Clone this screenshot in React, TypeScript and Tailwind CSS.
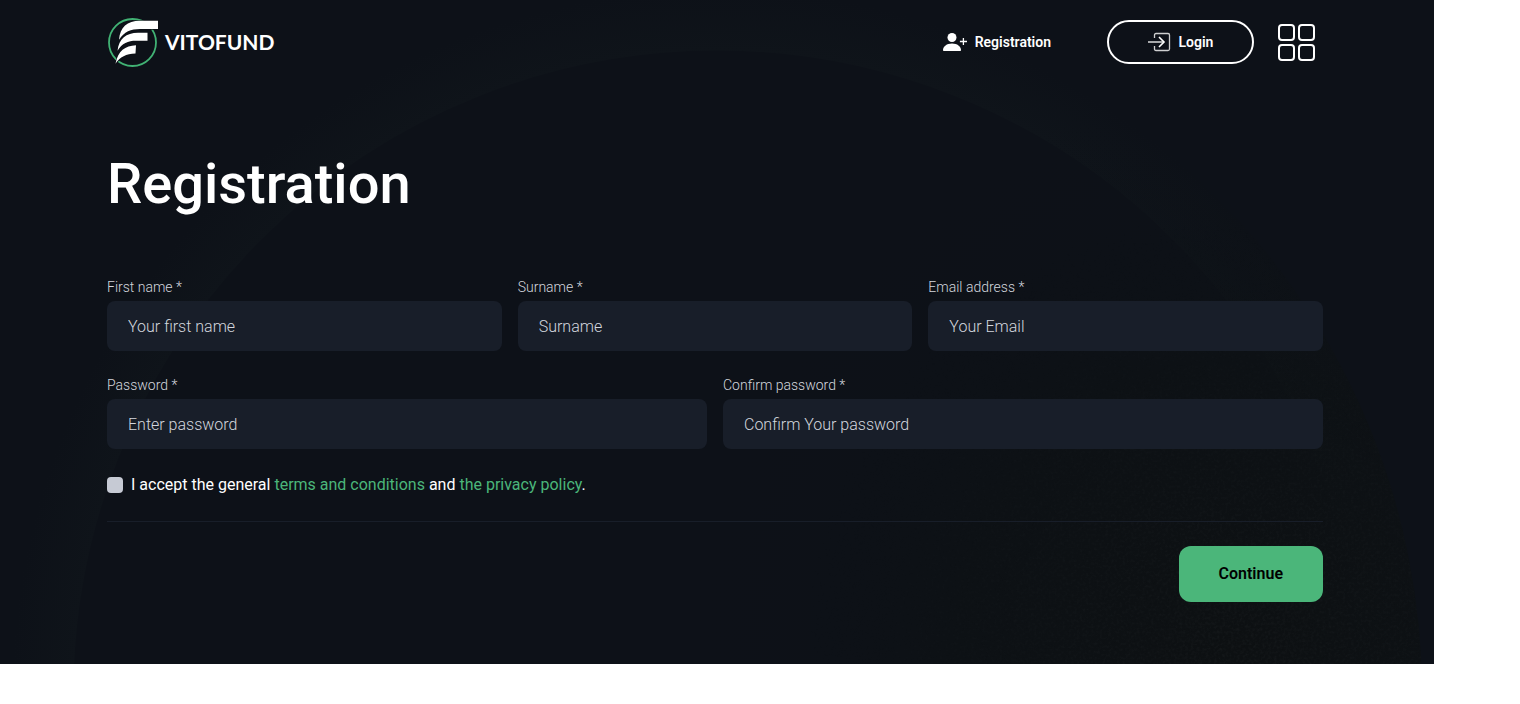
import type { ReactNode } from 'react';

interface FieldProps {
  id: string;
  label: string;
  placeholder: string;
  type?: string;
}

function Field({ id, label, placeholder, type = 'text' }: FieldProps) {
  return (
    <div className="flex-1 min-w-0">
      <label htmlFor={id} className="block mb-1 text-sm font-light text-[#d3d6de]">
        {label}
      </label>
      <input
        id={id}
        name={id}
        type={type}
        placeholder={placeholder}
        className="block w-full h-[50px] px-[21px] text-base font-light text-white bg-[#181e29] rounded-lg placeholder:text-[#d3d6de] placeholder:opacity-100 focus:outline-none focus:ring-1 focus:ring-[#4bb67a]"
      />
    </div>
  );
}

function LogoMark() {
  return (
    <svg width="52" height="50" viewBox="0 1 52 50" fill="none" aria-hidden="true">
      <circle cx="25.500" cy="26.500" r="23.500" stroke="#41b274" strokeWidth="1.8" />
      <g fill="#fff" stroke="#0d1117" strokeWidth="1.2" paintOrder="stroke">
        <path d="M51 4.800H33C20 5 13 11 12 23.800C17 15.800 24 13.100 33 13.100H51Z" />
        <path d="M40.500 16.800H31C19 17.100 12 22.300 10.500 34.800C15 27.300 21 24.800 29 24.800H40.500Z" />
        <path d="M29 29.300C18 29.800 11 34.800 8.500 47.800C13 40.800 19 38.100 28.500 37.600Z" />
      </g>
    </svg>
  );
}

function UserPlusIcon() {
  return (
    <svg width="24" height="20" viewBox="0 0 24 20" aria-hidden="true">
      <circle cx="9" cy="5.500" r="4.500" fill="#fff" />
      <path d="M0 18.200C0 14.200 3.800 11.400 9 11.400S18 14.200 18 18.200Q18 19 17.200 19H0.800Q0 19 0 18.200Z" fill="#fff" />
      <path d="M20.400 6V13M16.900 9.500H24" stroke="#fff" strokeWidth="1.300" />
    </svg>
  );
}

function LoginIcon() {
  return (
    <svg width="23" height="20" viewBox="0 0 23 20" fill="none" stroke="#fff" strokeWidth="1.300" aria-hidden="true">
      <path d="M6.500 6V3Q6.500 1.500 8 1.500H20Q21.500 1.500 21.500 3V17Q21.500 18.500 20 18.500H8Q6.500 18.500 6.500 17V14" strokeOpacity=".8" />
      <path d="M0 10H15.500" strokeOpacity=".8" strokeWidth="1.600" />
      <path d="M11 5L16 10L11 15" strokeWidth="1.600" />
    </svg>
  );
}

function MenuIcon() {
  return (
    <svg width="37" height="37" viewBox="0 0 37 37" fill="none" stroke="#fff" strokeWidth="2" aria-hidden="true">
      <rect x="1" y="1" width="15" height="15" rx="3" />
      <rect x="21" y="1" width="15" height="15" rx="3" />
      <rect x="1" y="21" width="15" height="15" rx="3" />
      <rect x="21" y="21" width="15" height="15" rx="3" />
    </svg>
  );
}

// faint ring and grain behind the form
function Backdrop() {
  return (
    <svg
      className="absolute inset-0 w-full h-full"
      viewBox="0 0 1434 664"
      preserveAspectRatio="xMidYMin slice"
      aria-hidden="true"
    >
      <defs>
        <radialGradient id="ring" gradientUnits="userSpaceOnUse" cx="717" cy="694" r="705">
          <stop offset=".91" stopColor="#0f141a" />
          <stop offset="1" stopColor="#0d1118" />
        </radialGradient>
        <radialGradient id="shade" gradientUnits="userSpaceOnUse" cx="1240" cy="650" r="560">
          <stop offset="0" stopColor="#0d1012" />
          <stop offset=".5" stopColor="#0d1114" stopOpacity=".8" />
          <stop offset="1" stopColor="#0d1118" stopOpacity="0" />
        </radialGradient>
        <radialGradient id="fade" gradientUnits="userSpaceOnUse" cx="1240" cy="650" r="460">
          <stop offset="0" stopColor="#fff" />
          <stop offset="1" stopColor="#fff" stopOpacity="0" />
        </radialGradient>
        <mask id="grainMask">
          <circle cx="717" cy="694" r="705" fill="url(#fade)" />
        </mask>
        <filter id="grain" x="0" y="0" width="100%" height="100%">
          <feTurbulence type="fractalNoise" baseFrequency=".35" numOctaves="2" />
          <feColorMatrix values="0 0 0 0 .55  0 0 0 0 .6  0 0 0 0 .6  .08 0 0 0 -.03" />
        </filter>
      </defs>
      <circle cx="717" cy="694" r="674" fill="none" stroke="url(#ring)" strokeWidth="61" />
      <circle cx="717" cy="694" r="705" fill="url(#shade)" />
      <g mask="url(#grainMask)">
        <rect width="1434" height="664" filter="url(#grain)" />
      </g>
    </svg>
  );
}

function GreenLink({ children }: { children: ReactNode }) {
  return (
    <a href="#" className="text-[#4bb67a] hover:underline">
      {children}
    </a>
  );
}

export default function App() {
  return (
    <div className="relative mr-[86px] overflow-hidden bg-[#0d1118] font-[Roboto,sans-serif] text-white">
      <Backdrop />

      <div className="relative pl-[107px] pr-[111px]">
        <header className="flex items-center justify-between h-[84px]">
          <a href="#" className="flex items-center gap-1.5">
            <LogoMark />
            <span className="text-[21px] font-bold font-[Lato,sans-serif]">VITOFUND</span>
          </a>

          <nav className="flex items-center pr-2">
            <a href="#" className="flex items-center gap-2 mr-14 text-sm font-semibold">
              <UserPlusIcon />
              Registration
            </a>
            <a
              href="#"
              className="flex items-center justify-center gap-2 w-[147px] h-11 mr-6 text-sm font-semibold border-2 border-white rounded-full"
            >
              <LoginIcon />
              Login
            </a>
            <button type="button" aria-label="Menu">
              <MenuIcon />
            </button>
          </nav>
        </header>

        <main className="pt-16 pb-[62px]">
          <h1 className="text-[56px] leading-[72px] font-medium">Registration</h1>

          <form className="mt-[57px]" onSubmit={(e) => e.preventDefault()}>
            <div className="flex gap-4">
              <Field id="firstName" label="First name *" placeholder="Your first name" />
              <Field id="surname" label="Surname *" placeholder="Surname" />
              <Field id="email" label="Email address *" placeholder="Your Email" type="email" />
            </div>

            <div className="flex gap-4 mt-6">
              <Field id="password" label="Password *" placeholder="Enter password" type="password" />
              <Field id="confirmPassword" label="Confirm password *" placeholder="Confirm Your password" type="password" />
            </div>

            <div className="flex items-center gap-2 mt-6">
              <input
                id="terms"
                type="checkbox"
                className="appearance-none size-4 rounded bg-[#c6cad4] checked:bg-[#4bb67a]"
              />
              <label htmlFor="terms">
                I accept the general <GreenLink>terms and conditions</GreenLink> and{' '}
                <GreenLink>the privacy policy</GreenLink>.
              </label>
            </div>

            <div className="flex justify-end mt-6 pt-6 border-t border-[#181e29]">
              <button type="submit" className="h-14 px-10 font-semibold text-black bg-[#4bb67a] rounded-xl">
                Continue
              </button>
            </div>
          </form>
        </main>
      </div>
    </div>
  );
}
